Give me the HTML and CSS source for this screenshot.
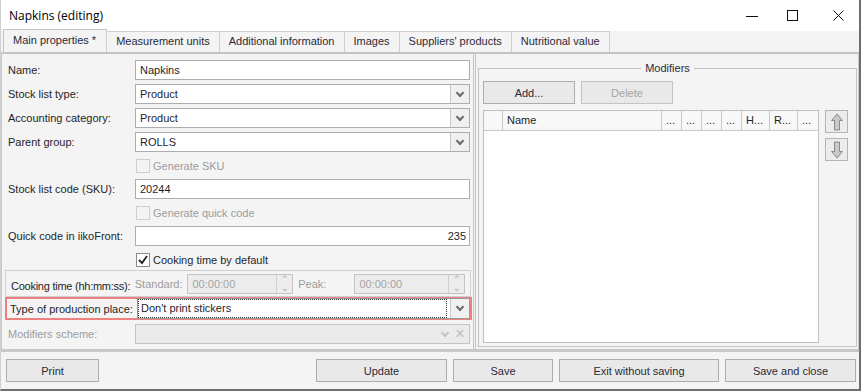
FILE: index.html
```html
<!DOCTYPE html>
<html>

<head>
  <meta charset="UTF-8">
  <title>Napkins (editing)</title>
  <link rel="stylesheet" href="styles.css">
</head>

<body>
  <div class="window">
    <header class="titlebar">
      <span class="title">Napkins (editing)</span>
      <div class="controls">
        <svg class="min" width="12" height="12" viewBox="0 0 12 12"><path d="M0 6.5h12" stroke="#111" /></svg>
        <svg class="max" width="12" height="12" viewBox="0 0 12 12"><rect x="0.5" y="0.5" width="10" height="10" fill="none" stroke="#111" /></svg>
        <svg class="cls" width="12" height="12" viewBox="0 0 12 12"><path d="M0.5 0.5l10 10M10.5 0.5l-10 10" stroke="#111" /></svg>
      </div>
    </header>

    <nav class="tabs">
      <div class="tab active">Main properties *</div>
      <div class="tab">Measurement units</div>
      <div class="tab">Additional information</div>
      <div class="tab">Images</div>
      <div class="tab">Suppliers' products</div>
      <div class="tab">Nutritional value</div>
    </nav>

    <main class="page">
      <section class="left">
        <div class="row">
          <label>Name:</label>
          <div class="field">Napkins</div>
        </div>
        <div class="row">
          <label>Stock list type:</label>
          <div class="field combo"><span>Product</span><i class="drop"></i></div>
        </div>
        <div class="row">
          <label>Accounting category:</label>
          <div class="field combo"><span>Product</span><i class="drop"></i></div>
        </div>
        <div class="row">
          <label>Parent group:</label>
          <div class="field combo"><span>ROLLS</span><i class="drop"></i></div>
        </div>
        <div class="row check-row">
          <label></label>
          <div class="check disabled"><i class="box"></i>Generate SKU</div>
        </div>
        <div class="row">
          <label>Stock list code (SKU):</label>
          <div class="field">20244</div>
        </div>
        <div class="row check-row">
          <label></label>
          <div class="check disabled"><i class="box"></i>Generate quick code</div>
        </div>
        <div class="row">
          <label>Quick code in iikoFront:</label>
          <div class="field num">235</div>
        </div>
        <div class="row check-row">
          <label></label>
          <div class="check"><i class="box checked">
            <svg width="12" height="12" viewBox="0 0 12 12"><path d="M2 6l3 3 5-7" fill="none" stroke="#222" stroke-width="1.8" /></svg>
          </i>Cooking time by default</div>
        </div>
        <div class="cooking">
          <span class="cook-label">Cooking time (hh:mm:ss):</span>
          <span class="muted">Standard:</span>
          <div class="spin"><span>00:00:00</span><i class="spin-btn"><b>&#8963;</b><b>&#8964;</b></i></div>
          <span class="muted">Peak:</span>
          <div class="spin wide"><span>00:00:00</span><i class="spin-btn"><b>&#8963;</b><b>&#8964;</b></i></div>
        </div>
        <div class="row focused">
          <label>Type of production place:</label>
          <div class="field combo"><span class="focus-text">Don't print stickers</span><i class="drop"></i></div>
        </div>
        <div class="row">
          <label class="muted">Modifiers scheme:</label>
          <div class="field combo off"><span></span><i class="drop"></i><i class="clear">&#215;</i></div>
        </div>
      </section>

      <section class="right">
        <fieldset class="group">
          <legend>Modifiers</legend>
          <div class="toolbar">
            <button class="btn">Add...</button>
            <button class="btn" disabled>Delete</button>
          </div>
          <div class="grid-wrap">
            <div class="table">
              <div class="thead">
                <span class="ind"></span>
                <span class="name">Name</span>
                <span>...</span>
                <span>...</span>
                <span>...</span>
                <span>...</span>
                <span class="w">H...</span>
                <span class="w">R...</span>
                <span>...</span>
              </div>
            </div>
            <div class="movers">
              <button class="mover">
                <svg width="14" height="18" viewBox="0 0 14 18"><path d="M7 1L1.5 7.5h3V17h5V7.5h3z" fill="#c9c9c9" stroke="#8a8a8a" /></svg>
              </button>
              <button class="mover">
                <svg width="14" height="18" viewBox="0 0 14 18"><path d="M7 17l5.5-6.5h-3V1h-5v9.5h-3z" fill="#c9c9c9" stroke="#8a8a8a" /></svg>
              </button>
            </div>
          </div>
        </fieldset>
      </section>
    </main>

    <footer class="actions">
      <button class="btn print">Print</button>
      <div class="spacer"></div>
      <button class="btn update">Update</button>
      <button class="btn save">Save</button>
      <button class="btn exit">Exit without saving</button>
      <button class="btn close">Save and close</button>
    </footer>
  </div>
</body>

</html>
```

FILE: styles.css
```css
*{
  box-sizing: border-box;
  margin: 0;
  padding: 0;
}

body{
  background: #f4f4f4;
  font-family: "Liberation Sans", Arial, sans-serif;
  font-size: 11px;
  color: #1f1f2a;
}

.window{
  width: 861px;
  height: 391px;
  border-right: 2px solid #6e6e6e;
  border-bottom: 2px solid #6e6e6e;
  border-left: 1px solid #d0d0d0;
  display: flex;
  flex-direction: column;
  overflow: hidden;
}

.titlebar{
  height: 31px;
  background: #fff;
  display: flex;
  align-items: center;
  padding-left: 8px;
  flex-shrink: 0;
}
.title{
  font-family: "Open Sans", sans-serif;
  font-size: 12px;
  color: #000;
}
.controls{
  margin-left: auto;
  display: flex;
  padding-right: 14px;
}
.controls .max{
  margin-left: 29px;
}
.controls .cls{
  margin-left: 34px;
}

/* tabs */
.tabs{
  display: flex;
  height: 23px;
  padding-left: 2px;
  border-bottom: 2px solid #c4c4c4;
  align-items: flex-end;
  flex-shrink: 0;
}
.tab{
  height: 21px;
  padding: 0 9px;
  border: 1px solid #cfcfcf;
  border-bottom: none;
  margin-left: -1px;
  line-height: 19px;
  background: #f4f4f4;
  color: #2a2a3a;
  white-space: nowrap;
}
.tab.active{
  height: 23px;
  border-color: #c4c4c4;
  padding: 0 10px 0 9px;
  margin-left: 0;
  line-height: 21px;
}

.page{
  display: flex;
  height: 298px;
  border-bottom: 3px solid #c8c8c8;
  border-left: 1px solid #c8c8c8;
  border-right: 1px solid #c8c8c8;
  flex-shrink: 0;
}

/* left form */
.left{
  width: 474px;
  padding: 6px 1px 0 2px;
  display: flex;
  flex-direction: column;
  gap: 4px;
  border-right: 3px double #c4c4c4;
}
.row{
  display: flex;
  align-items: center;
  height: 20px;
  padding-left: 4px;
  white-space: nowrap;
}
.row label{
  width: 127px;
  flex-shrink: 0;
}
.check-row{
  height: 19px;
}
.field{
  flex: 1;
  height: 20px;
  margin-right: 2px;
  background: #fff;
  border: 1px solid #adadad;
  padding: 0 4px;
  line-height: 18px;
  display: flex;
}
.field.num{
  justify-content: flex-end;
  padding-right: 3px;
}
.combo span{
  flex: 1;
}
.drop{
  width: 19px;
  margin-right: -4px;
  border-left: 1px solid #c8c8c8;
  background: #f0f0f0;
  position: relative;
}
.drop::after{
  content: "";
  position: absolute;
  left: 6px;
  top: 5px;
  width: 4px;
  height: 4px;
  border-right: 2px solid #6a6a6a;
  border-bottom: 2px solid #6a6a6a;
  transform: rotate(45deg);
}
.field.off{
  background: #ebebeb;
  border-color: #c4c4c4;
}
.field.off .drop{
  background: #ebebeb;
  width: 18px;
  border-left: none;
}
.field.off .drop::after{
  border-color: #c4c4c4;
}
.clear{
  width: 19px;
  margin-right: -4px;
  border-left: 1px solid #c8c8c8;
  font-style: normal;
  color: #bdbdbd;
  text-align: center;
  font-size: 16px;
}

.check{
  display: flex;
  align-items: center;
  gap: 3px;
  padding-left: 1px;
}
.check.disabled{
  color: #9c9c9c;
}
.box{
  width: 14px;
  height: 14px;
  border: 1px solid #8c8c8c;
  background: #fff;
  display: flex;
  align-items: center;
  justify-content: center;
}
.disabled .box{
  border-color: #cfcfcf;
  background: #f4f4f4;
}

.muted{
  color: #9c9c9c;
}

.cooking{
  display: flex;
  align-items: center;
  height: 27px;
  margin-top: -3px;
  margin-left: 1px;
  margin-right: 1px;
  border: 1px solid #cfcfcf;
  padding-left: 5px;
  white-space: nowrap;
}
.cook-label{
  width: 129px;
  padding-top: 4px;
  letter-spacing: -0.25px;
}
.spin{
  width: 110px;
  height: 20px;
  margin: 0 5px 0 5px;
  border: 1px solid #c4c4c4;
  background: #ececec;
  color: #a4a4a4;
  display: flex;
  padding-left: 4px;
  line-height: 18px;
}
.spin.wide{
  width: 115px;
  margin-left: 28px;
}
.spin span{
  flex: 1;
}
.spin-btn{
  width: 16px;
  border-left: 1px solid #d0d0d0;
  display: flex;
  flex-direction: column;
  font-style: normal;
  font-size: 9px;
  line-height: 9px;
  text-align: center;
  color: #c0c0c0;
}

.focused{
  height: 23px;
  margin-top: -4px;
  margin-left: 1px;
  margin-right: 0;
  padding-left: 3px;
  border: 2px solid #ee8080;
}
.focused .field{
  margin-right: 0;
  height: 21px;
  border-color: #9a9a9a;
}
.focus-text{
  outline: 1px dotted #333;
  outline-offset: 0;
  margin: 1px 4px 1px -3px;
  padding-left: 2px;
  line-height: 17px;
}

/* modifiers */
.right{
  flex: 1;
  padding: 8px 2px 2px 2px;
  display: flex;
}
.group{
  flex: 1;
  border: 1px solid #c4c4c4;
  padding: 7px 4px 3px 4px;
  display: flex;
  flex-direction: column;
  gap: 6px;
}
.group legend{
  margin: 0 auto;
  padding: 0 4px;
  color: #2a2a3a;
}
.toolbar{
  display: flex;
  gap: 6px;
}
.btn{
  font-family: inherit;
  font-size: 11px;
  color: #2a2a3a;
  height: 23px;
  border: 1px solid #adadad;
  background: #e9e9e9;
}
.btn:disabled{
  color: #a4a4a4;
  border-color: #c4c4c4;
}
.toolbar .btn{
  width: 92px;
}
.grid-wrap{
  flex: 1;
  display: flex;
  gap: 6px;
}
.table{
  flex: 1;
  background: #fff;
  border: 1px solid #c0c0c0;
}
.thead{
  display: flex;
  height: 20px;
  border-bottom: 1px solid #c8c8c8;
  background: #f8f8f8;
}
.thead span{
  width: 20px;
  border-right: 1px solid #c8c8c8;
  padding-left: 4px;
  line-height: 19px;
  overflow: hidden;
}
.thead .ind{
  width: 19px;
}
.thead .name{
  width: 159px;
}
.thead .w{
  width: 28px;
}
.thead span:last-child{
  border-right: none;
}
.movers{
  display: flex;
  flex-direction: column;
  gap: 5px;
  padding-right: 4px;
}
.mover{
  width: 23px;
  height: 23px;
  border: 1px solid #b4b4b4;
  background: #ececec;
  display: flex;
  align-items: center;
  justify-content: center;
}

/* bottom buttons */
.actions{
  flex: 1;
  display: flex;
  align-items: center;
  padding: 0 3px 0 5px;
  gap: 6px;
}
.spacer{
  flex: 1;
}
.actions .btn{
  height: 23px;
}
.print{ width: 93px; }
.update{ width: 131px; }
.save{ width: 100px; }
.exit{ width: 160px; }
.close{ width: 131px; }
```
